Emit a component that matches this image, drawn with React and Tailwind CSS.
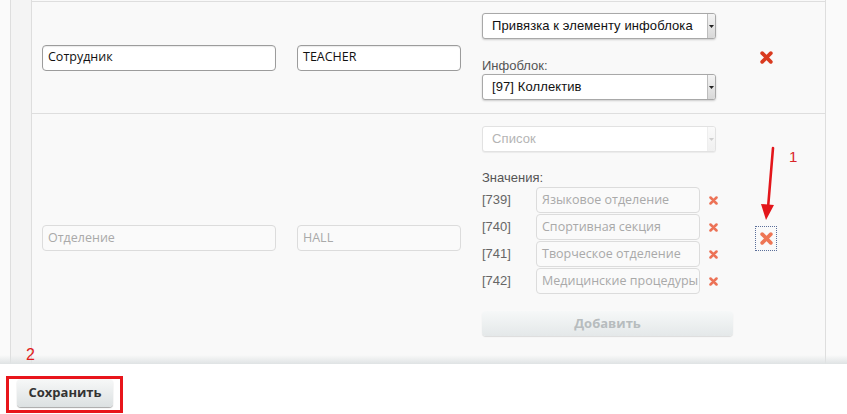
import React from "react";

const sans = { fontFamily: '"Liberation Sans", Arial, sans-serif' };

function Cross({ size = 12, color = "#dc3a22" }) {
  return (
    <svg width={size} height={size} viewBox="0 0 12 12">
      <path d="M2 2 L10 10 M10 2 L2 10" stroke={color} strokeWidth="3.4" strokeLinecap="round" />
    </svg>
  );
}

function Select({ text, disabled }) {
  return (
    <div
      className={
        "flex h-[26px] w-[234px] items-stretch rounded-[3px] border bg-white " +
        (disabled
          ? "border-[#e2e2e2] text-[#b4b4b4] shadow-[0_1px_1px_rgba(0,0,0,0.06)]"
          : "border-[#a8a8a8] text-[#111] shadow-[0_1px_2px_rgba(0,0,0,0.18)]")
      }
    >
      <div className="flex flex-1 items-center pl-[9px] text-[13px] tracking-[0.1px]" style={sans}>
        {text}
      </div>
      <div
        className={
          "flex w-[8px] items-center justify-center rounded-r-[2px] border-l bg-linear-to-b " +
          (disabled ? "border-[#eee] from-[#fafafa] to-[#f0f0f0]" : "border-[#bdbdbd] from-[#f4f4f4] to-[#d8d8d8]")
        }
      >
        <svg width="5" height="3" viewBox="0 0 5 3">
          <path d="M0 0 H5 L2.5 3 Z" fill={disabled ? "#cfcfcf" : "#222"} />
        </svg>
      </div>
    </div>
  );
}

function Input({ value, width, disabled }) {
  return (
    <div
      className={
        "flex h-[26px] items-center overflow-hidden whitespace-nowrap rounded-[4px] border pl-[5px] text-[12.5px] " +
        (disabled
          ? "border-[#dcdcdc] bg-[#fafafa] text-[#a9a9a9]"
          : "border-[#9c9c9c] bg-white text-[#111] shadow-[inset_0_1px_1px_rgba(0,0,0,0.08)]")
      }
      style={{ width, fontFamily: '"Open Sans", sans-serif' }}
    >
      {value}
    </div>
  );
}

const values = [
  ["[739]", "Языковое отделение"],
  ["[740]", "Спортивная секция"],
  ["[741]", "Творческое отделение"],
  ["[742]", "Медицинские процедуры"],
];

export default function App() {
  return (
    <div className="relative h-[414px] w-[847px] overflow-hidden bg-white">
      <div className="flex h-[364px]">
        <div className="w-[10px] bg-[#fafafa]" />
        <div className="w-[22px] border-x border-[#dedede] bg-[#f4f4f4]" />
        <div className="flex w-[793px] flex-col bg-[#f9f9f9]">
          <div className="h-[2px] border-b border-[#dedede]" />
          {/* Row 1 */}
          <div className="flex items-center border-b border-[#dedede] pl-[10px]">
            <Input value="Сотрудник" width={234} />
            <div className="ml-[21px]">
              <Input value="TEACHER" width={164} />
            </div>
            <div className="ml-[21px] flex w-[252px] flex-col pt-[11px] pb-[13px]">
              <Select text="Привязка к элементу инфоблока" />
              <div className="mt-[19px] text-[13px] leading-[15px] text-[#555]" style={sans}>
                Инфоблок:
              </div>
              <div className="mt-[1px]">
                <Select text="[97] Коллектив" />
              </div>
            </div>
            <div className="ml-[21px] flex h-[25px] w-[22px] items-center justify-center">
              <Cross size={13} color="#d93a1f" />
            </div>
          </div>
          {/* Row 2 */}
          <div className="flex items-center pl-[10px]">
            <Input value="Отделение" width={234} disabled />
            <div className="ml-[21px]">
              <Input value="HALL" width={164} disabled />
            </div>
            <div className="ml-[21px] flex w-[252px] flex-col pt-[12px] pb-[26px]">
              <Select text="Список" disabled />
              <div className="mt-[18px] text-[13px] leading-[15px] text-[#555]" style={sans}>
                Значения:
              </div>
              <div className="mt-[2px] flex flex-col gap-[1px]">
                {values.map(([id, v]) => (
                  <div key={id} className="flex items-center">
                    <div className="w-[54px] text-[13px] text-[#666]" style={sans}>
                      {id}
                    </div>
                    <Input value={v} width={164} disabled />
                    <div className="ml-[9px] flex w-[9px] items-center justify-center">
                      <Cross size={9} color="#ec7357" />
                    </div>
                  </div>
                ))}
              </div>
              <div
                className="mt-[17px] flex h-[25px] w-[251px] items-center justify-center rounded-[4px] bg-linear-to-b from-[#f6f8f8] to-[#e4e8e9] text-[13px] font-bold text-[#b7bcbe] shadow-[0_1px_1px_rgba(0,0,0,0.12)]"
                style={{ fontFamily: '"Open Sans", sans-serif' }}
              >
                Добавить
              </div>
            </div>
            <div className="ml-[21px] flex h-[25px] w-[22px] items-center justify-center border border-dotted border-[#5b6f9a]">
              <Cross size={13} color="#ee7554" />
            </div>
          </div>
        </div>
        <div className="flex-1 border-l border-[#dedede] bg-[#fafafa]" />
      </div>

      {/* footer shadow */}
      <div className="absolute left-0 top-[355px] h-[9px] w-full bg-linear-to-b from-[rgba(223,227,228,0)] to-[#dfe3e4]" />

      {/* footer */}
      <div className="flex h-[50px] items-start bg-white">
        <div
          className="ml-[17px] mt-[15px] flex h-[28px] w-[96px] items-center justify-center rounded-[4px] bg-linear-to-b from-[#f7f8f8] to-[#dce1e2] text-[13px] font-bold text-[#333] shadow-[0_1px_1px_rgba(0,0,0,0.35)]"
          style={{ fontFamily: '"Open Sans", sans-serif' }}
        >
          Сохранить
        </div>
      </div>

      {/* annotations */}
      <div className="absolute left-[6px] top-[376px] h-[37px] w-[117px] border-[3px] border-[#e8151b]" />
      <div className="absolute left-[26px] top-[346px] text-[16px] leading-[18px] text-[#e01b1b]" style={sans}>
        2
      </div>
      <div className="absolute left-[789px] top-[148px] text-[15px] leading-[18px] text-[#d9262a]" style={sans}>
        1
      </div>
      <svg className="absolute left-[755px] top-[144px]" width="26" height="80" viewBox="0 0 26 80">
        <path d="M18 4 L13 64" stroke="#e3161b" strokeWidth="2.6" strokeLinecap="round" />
        <path d="M6 60 L19 61 L11 76 Z" fill="#e3161b" />
      </svg>
    </div>
  );
}
